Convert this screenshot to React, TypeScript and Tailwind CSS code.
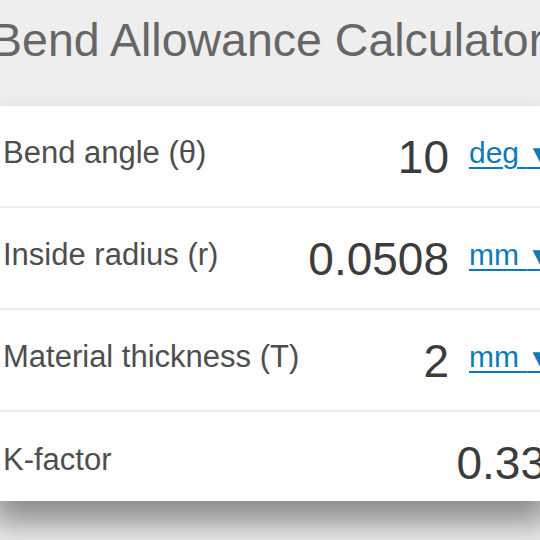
import React from "react";

const rows = [
  { label: "Bend angle (θ)", value: "10", unit: "deg" },
  { label: "Inside radius (r)", value: "0.0508", unit: "mm" },
  { label: "Material thickness (T)", value: "2", unit: "mm" },
];

export default function App() {
  return (
    <div
      className="w-[540px] h-[540px] overflow-hidden bg-[#eeeeee]"
      style={{ fontFamily: '"Liberation Sans", Arial, sans-serif' }}
    >
      <div className="w-[580px] ml-[-8px]">
        <div className="h-[106px] bg-[#eeeeee]">
          <div className="ml-[-1px] pt-[17px] text-[46.5px] leading-[46px] text-[#666666] whitespace-nowrap">
            Bend Allowance Calculator
          </div>
        </div>
        <div className="bg-white w-[558px] shadow-[0_22px_30px_rgba(0,0,0,0.42)]">
          {rows.map((r) => (
            <div
              key={r.label}
              className="h-[102px] border-b-2 border-[#eeeeee] flex items-start pl-[11px]"
            >
              <div className="mt-[31px] text-[31px] leading-[31px] text-[#4e4e4e] whitespace-nowrap">
                {r.label}
              </div>
              <div className="ml-auto mr-[20px] mt-[28px] text-[46px] leading-[46px] text-[#3c3c3c] whitespace-nowrap">
                {r.value}
              </div>
              <div className="w-[81px] shrink-0 mt-[32px] text-[30px] leading-[30px] text-[#0b7cb8] whitespace-nowrap">
                <span className="underline decoration-2 underline-offset-[4px]">
                  {r.unit}&nbsp;<span className="text-[26px]">▼</span>
                </span>
              </div>
            </div>
          ))}
          <div className="h-[89px] flex items-start pl-[11px]">
            <div className="mt-[32px] text-[31px] leading-[31px] text-[#4e4e4e]">K-factor</div>
            <div className="ml-auto mr-[4px] mt-[28px] text-[46px] leading-[46px] text-[#3c3c3c] whitespace-nowrap">
              0.33
            </div>
          </div>
        </div>
      </div>
    </div>
  );
}
